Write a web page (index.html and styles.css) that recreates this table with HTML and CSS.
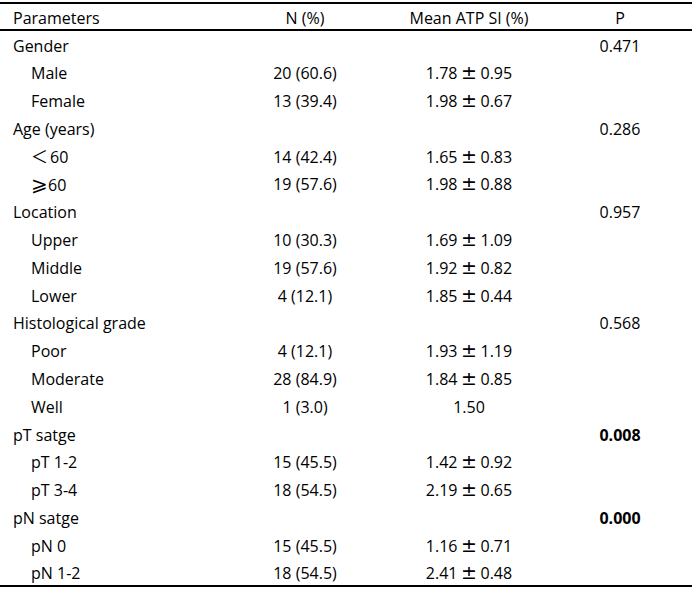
FILE: index.html
```html
<!DOCTYPE html>
<html lang="en">
<head>
<meta charset="utf-8">
<title>Table</title>
<link rel="stylesheet" href="styles.css">
</head>
<body>
<div class="wrap">
<table class="data">
  <colgroup>
    <col class="c1"><col class="c2"><col class="c3"><col class="c4"><col class="c5">
  </colgroup>
  <thead>
    <tr><th class="lbl">Parameters</th><th>N (%)</th><th>Mean ATP SI (%)</th><th>P</th><th></th></tr>
  </thead>
  <tbody>
    <tr><td class="lbl">Gender</td><td></td><td></td><td>0.471</td><td></td></tr>
    <tr><td class="sub">Male</td><td>20 (60.6)</td><td>1.78<span class="pm">±</span>0.95</td><td></td><td></td></tr>
    <tr><td class="sub">Female</td><td>13 (39.4)</td><td>1.98<span class="pm">±</span>0.67</td><td></td><td></td></tr>
    <tr><td class="lbl">Age (years)</td><td></td><td></td><td>0.286</td><td></td></tr>
    <tr><td class="sub"><span class="sym">＜</span>60</td><td>14 (42.4)</td><td>1.65<span class="pm">±</span>0.83</td><td></td><td></td></tr>
    <tr><td class="sub"><span class="sym ge">⩾</span>60</td><td>19 (57.6)</td><td>1.98<span class="pm">±</span>0.88</td><td></td><td></td></tr>
    <tr><td class="lbl">Location</td><td></td><td></td><td>0.957</td><td></td></tr>
    <tr><td class="sub">Upper</td><td>10 (30.3)</td><td>1.69<span class="pm">±</span>1.09</td><td></td><td></td></tr>
    <tr><td class="sub">Middle</td><td>19 (57.6)</td><td>1.92<span class="pm">±</span>0.82</td><td></td><td></td></tr>
    <tr><td class="sub">Lower</td><td>4 (12.1)</td><td>1.85<span class="pm">±</span>0.44</td><td></td><td></td></tr>
    <tr><td class="lbl">Histological grade</td><td></td><td></td><td>0.568</td><td></td></tr>
    <tr><td class="sub">Poor</td><td>4 (12.1)</td><td>1.93<span class="pm">±</span>1.19</td><td></td><td></td></tr>
    <tr><td class="sub">Moderate</td><td>28 (84.9)</td><td>1.84<span class="pm">±</span>0.85</td><td></td><td></td></tr>
    <tr><td class="sub">Well</td><td>1 (3.0)</td><td>1.50</td><td></td><td></td></tr>
    <tr><td class="lbl">pT satge</td><td></td><td></td><td class="bold">0.008</td><td></td></tr>
    <tr><td class="sub">pT 1-2</td><td>15 (45.5)</td><td>1.42<span class="pm">±</span>0.92</td><td></td><td></td></tr>
    <tr><td class="sub">pT 3-4</td><td>18 (54.5)</td><td>2.19<span class="pm">±</span>0.65</td><td></td><td></td></tr>
    <tr><td class="lbl">pN satge</td><td></td><td></td><td class="bold">0.000</td><td></td></tr>
    <tr><td class="sub">pN 0</td><td>15 (45.5)</td><td>1.16<span class="pm">±</span>0.71</td><td></td><td></td></tr>
    <tr><td class="sub">pN 1-2</td><td>18 (54.5)</td><td>2.41<span class="pm">±</span>0.48</td><td></td><td></td></tr>
  </tbody>
</table>
</div>
</body>
</html>
```
FILE: styles.css
```css
html, body {
  margin: 0;
  padding: 0;
  background: #ffffff;
}
.wrap {
  padding-top: 2px;
  width: 692px;
}
.data {
  width: 692px;
  table-layout: fixed;
  border-collapse: collapse;
  border-top: 2px solid #000;
  border-bottom: 2px solid #000;
  font-family: "Open Sans", "Noto Sans", sans-serif;
  font-size: 16px;
  color: #000;
}
.c1 { width: 230px; }
.c2 { width: 150px; }
.c3 { width: 178px; }
.c4 { width: 124px; }
.c5 { width: 10px; }
.data th {
  font-weight: normal;
  height: 27px;
  padding: 3px 0 0 0;
  text-align: center;
  vertical-align: middle;
  border-bottom: 2px solid #000;
  box-sizing: border-box;
  line-height: 20px;
}
.data td {
  height: 27.8px;
  padding: 3px 0 0 0;
  box-sizing: border-box;
  line-height: 20px;
  text-align: center;
  vertical-align: middle;
  white-space: nowrap;
}
.data .lbl {
  text-align: left;
  padding-left: 13px;
}
.data .sub {
  text-align: left;
  padding-left: 31px;
}
.bold {
  font-weight: bold;
}
.pm {
  display: inline-block;
  width: 23px;
  text-align: center;
  font-family: "DejaVu Sans", sans-serif;
  font-size: 19px;
  font-weight: normal;
  line-height: 1;
}
.sym {
  display: inline-block;
  width: 19px;
  text-align: left;
  font-family: "Noto Sans CJK SC", sans-serif;
  font-size: 17px;
  line-height: 1;
}
.sym.ge {
  width: 17px;
  font-family: "DejaVu Sans", sans-serif;
  font-size: 20px;
}
```
